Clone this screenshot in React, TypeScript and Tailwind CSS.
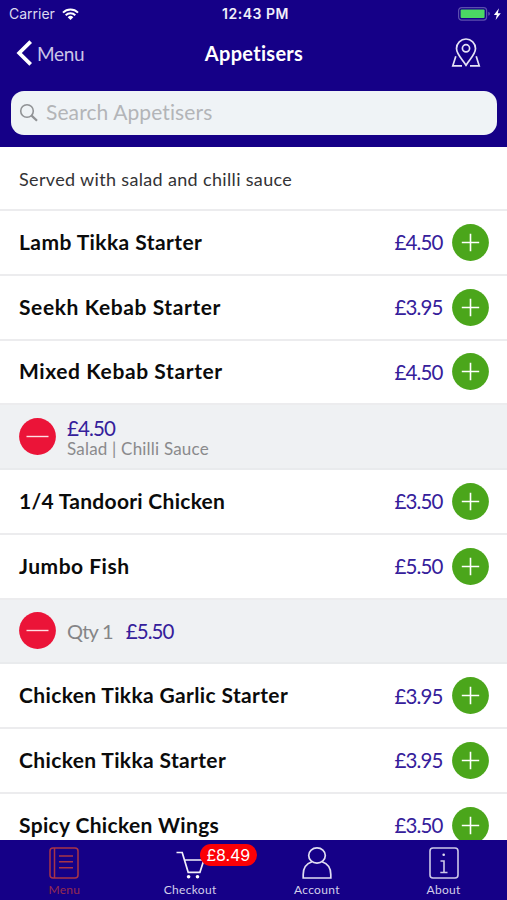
type Item = { kind: 'item'; name: string; price: string; track: string };
type Extra = { kind: 'extra'; price: string; note?: string; qty?: string };

const rows: (Item | Extra)[] = [
  { kind: 'item', name: 'Lamb Tikka Starter', price: '£4.50', track: 'tracking-[0.42px]' },
  { kind: 'item', name: 'Seekh Kebab Starter', price: '£3.95', track: 'tracking-[0.6px]' },
  { kind: 'item', name: 'Mixed Kebab Starter', price: '£4.50', track: 'tracking-[0.6px]' },
  { kind: 'extra', price: '£4.50', note: 'Salad | Chilli Sauce' },
  { kind: 'item', name: '1/4 Tandoori Chicken', price: '£3.50', track: 'tracking-[0.28px]' },
  { kind: 'item', name: 'Jumbo Fish', price: '£5.50', track: 'tracking-[0.5px]' },
  { kind: 'extra', price: '£5.50', qty: 'Qty 1' },
  { kind: 'item', name: 'Chicken Tikka Garlic Starter', price: '£3.95', track: 'tracking-[0.36px]' },
  { kind: 'item', name: 'Chicken Tikka Starter', price: '£3.95', track: 'tracking-[0.36px]' },
  { kind: 'item', name: 'Spicy Chicken Wings', price: '£3.50', track: 'tracking-[0.34px]' },
];

function AddButton() {
  return (
    <button className="ml-[9.5px] h-[37px] w-[37px] shrink-0">
      <svg width="37" height="37" viewBox="0 0 37 37" fill="none">
        <circle cx="18.5" cy="18.5" r="18.4" fill="#4ba61b" />
        <path d="M9.8 18.5h17.4M18.5 9.8v17.4" stroke="#fff" strokeWidth="1.6" />
      </svg>
    </button>
  );
}

function RemoveButton() {
  return (
    <button className="h-[37px] w-[37px] shrink-0">
      <svg width="37" height="37" viewBox="0 0 37 37" fill="none">
        <circle cx="18.5" cy="18.5" r="18.4" fill="#eb1438" />
        <path d="M7.5 18.5h22" stroke="#ffdfe4" strokeWidth="1.4" />
      </svg>
    </button>
  );
}

function ItemRow({ item }: { item: Item }) {
  return (
    <div className="flex h-[64.75px] shrink-0 items-center border-b-2 border-[#ececee] pl-[19px] pr-[18px]">
      <span className={`whitespace-nowrap pb-px text-[21px] font-bold leading-6 text-[#0b0b0b] ${item.track}`}>{item.name}</span>
      <span className="ml-auto text-[20.5px] leading-6 tracking-[-0.9px] text-[#35209b]">{item.price}</span>
      <AddButton />
    </div>
  );
}

function ExtraRow({ item }: { item: Extra }) {
  return (
    <div className="flex h-[64.75px] shrink-0 items-center border-b-2 border-[#e9ebed] bg-[#eff1f3] pl-[19px]">
      <RemoveButton />
      {item.note ? (
        <div className="ml-[11px] flex flex-col pt-[3px]">
          <span className="text-[20.5px] leading-[22px] tracking-[-0.9px] text-[#35209b]">{item.price}</span>
          <span className="text-[17px] leading-5 tracking-[0.2px] text-[#8a8a8c]">{item.note}</span>
        </div>
      ) : (
        <div className="ml-[11px] flex items-center gap-3 text-[20.5px] leading-6 tracking-[-0.9px]">
          <span className="text-[20px] tracking-[-0.8px] text-[#858587]">{item.qty}</span>
          <span className="pl-px text-[#35209b]">{item.price}</span>
        </div>
      )}
    </div>
  );
}

export default function App() {
  return (
    <div className="flex h-[900px] w-[507px] flex-col overflow-hidden bg-white font-['Lato',sans-serif] [font-variant-ligatures:none]">
      <header className="flex h-[147px] shrink-0 flex-col bg-[#150087] text-white">
        <div className="grid h-7 grid-cols-3 items-center pl-[9px] pr-[5px] font-['Inter',sans-serif] text-[14px]">
          <div className="flex items-center gap-[7px]">
            <span className="pb-[2px] text-[#dcd9ef]">Carrier</span>
            <svg className="-mt-px" width="17" height="12" viewBox="0 0 17 12" fill="none" stroke="#fff" strokeWidth="2">
              <path d="M1 4.6a10.7 10.7 0 0 1 15 0M3.7 7.3a6.8 6.8 0 0 1 9.6 0" />
              <path d="M8.5 12 5.7 9.2a4 4 0 0 1 5.6 0z" fill="#fff" stroke="none" />
            </svg>
          </div>
          <span className="pb-[2px] text-center font-semibold tracking-[0.5px] text-[#f1f0fa]">12:43 PM</span>
          <div className="flex items-center justify-end">
            <svg width="44" height="15" viewBox="0 0 44 15" fill="none">
              <rect x="0.6" y="0.6" width="28" height="12.5" rx="3" stroke="#5c4eae" strokeWidth="1.2" />
              <rect x="2.6" y="2.6" width="24" height="8.5" rx="1" fill="#4bd763" />
              <path d="M30.4 4.8q1.4.5 1.4 2t-1.4 2z" fill="#6c60b5" />
              <path d="M41 1.2 35.9 7.9h2.9L37.6 13 42.8 6.2h-3z" fill="#fff" />
            </svg>
          </div>
        </div>
        <div className="grid h-[52px] grid-cols-3 items-center pl-4 pr-[26px]">
          <div className="flex items-center gap-[5px]">
            <svg className="-mt-[3px]" width="16" height="26" viewBox="0 0 16 26" fill="none" stroke="#fff" strokeWidth="3.8">
              <path d="M14.7 1.6 3.2 13l11.5 11.4" />
            </svg>
            <span className="text-[19px] tracking-[-0.3px] text-[#cbc5e7]">Menu</span>
          </div>
          <h1 className="ml-[11px] pb-[2px] text-center text-[20px] font-bold leading-6 tracking-[0.3px]">Appetisers</h1>
          <button className="flex justify-end pb-[3px]">
            <svg width="30" height="29" viewBox="0 0 30 29" fill="none" stroke="#e5e2f5" strokeWidth="1.7">
              <path d="M15 27.2C11.5 21.3 5.5 16.3 5.5 10.5a9.5 9.5 0 0 1 19 0C24.5 16.3 18.5 21.3 15 27.2z" />
              <circle cx="15" cy="10.3" r="3.6" />
              <path d="M4.8 18.3 1.8 27.8H11M25.2 18.3l3 9.5H19" />
            </svg>
          </button>
        </div>
        <div className="ml-[11px] mr-[10px] mt-[11px] flex h-[44px] shrink-0 items-center rounded-[13px] bg-[#eff3f6] pl-[8px]">
          <svg width="20" height="20" viewBox="0 0 20 20" fill="none" stroke="#909295">
            <circle cx="8" cy="8" r="6.3" strokeWidth="1.6" />
            <path d="m12.6 12.6 5.4 5.2" strokeWidth="2.2" />
          </svg>
          <span className="ml-[7px] pb-[2px] text-[21px] tracking-[0.1px] text-[#b3b5b8]">Search Appetisers</span>
        </div>
      </header>

      <main className="flex min-h-0 flex-1 flex-col overflow-hidden">
        <div className="flex h-[64px] shrink-0 items-center border-b-2 border-[#ececee] pl-[19px] pt-[2px]">
          <p className="text-[18px] tracking-[0.34px] text-[#333335]">Served with salad and chilli sauce</p>
        </div>
        {rows.map((row, i) =>
          row.kind === 'item' ? <ItemRow key={i} item={row} /> : <ExtraRow key={i} item={row} />,
        )}
      </main>

      <nav className="grid h-[60px] shrink-0 grid-cols-4 bg-[#150087] pt-[7px] text-[12px] tracking-[0.3px] text-[#d3cfea]">
        <div className="flex flex-col items-center pl-[2px] text-[#972b50]">
          <svg width="30" height="32" viewBox="0 0 30 32" fill="none" stroke="#a93447" strokeWidth="1.5">
            <rect x="1" y="1" width="28" height="30" rx="3" />
            <path d="M5.5 1v30M10 9h14M10 14.7h14M10 20.7h14" />
          </svg>
          <span className="mt-[3px] leading-4">Menu</span>
        </div>
        <div className="relative flex flex-col items-center">
          <svg width="30" height="32" viewBox="0 0 30 32" fill="none" stroke="#f1effa" strokeWidth="1.7">
            <path d="M1.5 5.5h5.7l6 19.8h11.7l4-12.3H9.5" />
            <circle cx="13.6" cy="29.7" r="1.8" fill="#fff" stroke="none" />
            <circle cx="22.5" cy="29.7" r="1.8" fill="#fff" stroke="none" />
          </svg>
          <span className="mt-[3px] leading-4">Checkout</span>
          <span className="absolute left-[73px] top-[-3px] flex h-[22px] w-[57px] items-center justify-center rounded-full bg-[#fc0006] font-['Inter',sans-serif] text-[16px] tracking-[-0.1px] text-white">
            £8.49
          </span>
        </div>
        <div className="flex flex-col items-center">
          <svg width="30" height="32" viewBox="0 0 30 32" fill="none" stroke="#e1def2" strokeWidth="1.7">
            <ellipse cx="15" cy="8.5" rx="8.3" ry="7.6" />
            <path d="M10 14.8C4.5 16.6 1.2 21.5 1.2 27.5V31h27.6v-3.5c0-6-3.3-10.9-8.8-12.7" />
          </svg>
          <span className="mt-[3px] leading-4">Account</span>
        </div>
        <div className="flex flex-col items-center">
          <svg width="30" height="32" viewBox="0 0 30 32" fill="none" stroke="#cdc8e8" strokeWidth="1.6">
            <rect x="1" y="1" width="28" height="30" rx="3" />
            <path d="M11.5 14H15v11.5M11.3 25.5h7.2" />
            <circle cx="14.7" cy="7.7" r="1.3" fill="#e1def2" stroke="none" />
          </svg>
          <span className="mt-[3px] leading-4">About</span>
        </div>
      </nav>
    </div>
  );
}
